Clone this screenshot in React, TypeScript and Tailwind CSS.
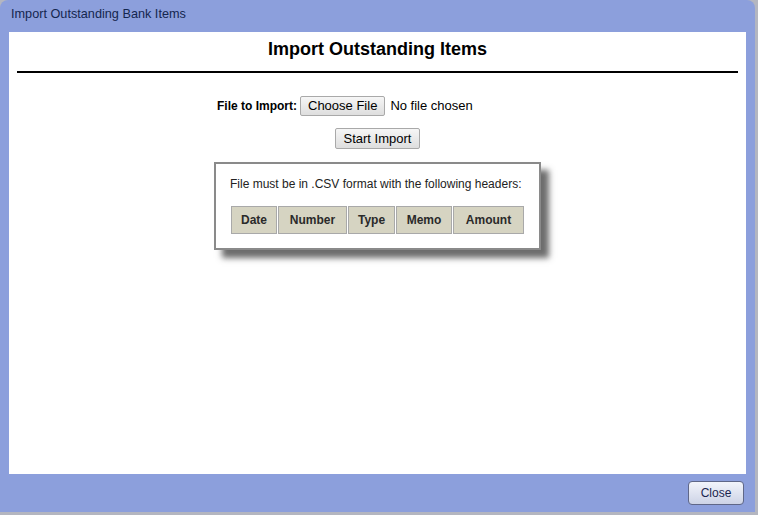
const font = { fontFamily: '"Liberation Sans", Arial, sans-serif' };

const headers = [
  { label: "Date", w: "w-[46px]" },
  { label: "Number", w: "w-[69px]" },
  { label: "Type", w: "w-[47px]" },
  { label: "Memo", w: "w-[56px]" },
  { label: "Amount", w: "w-[71px]" },
];

export default function App() {
  return (
    <div className="h-[515px] w-[758px] overflow-hidden bg-[#b4b6c0]" style={font}>
      {/* dialog */}
      <div className="flex h-[512px] w-[755px] flex-col rounded-t-[8px] bg-[#8c9fdc]">
        {/* title bar */}
        <div className="flex h-[32px] items-center pl-[11px] pb-[2px] text-[12.7px] text-[#14264f]">
          Import Outstanding Bank Items
        </div>

        {/* content */}
        <div className="mx-[9px] flex h-[442px] flex-col bg-white">
          <h1 className="mt-[7px] text-center text-[18px] font-bold leading-[20px] text-black">
            Import Outstanding Items
          </h1>
          <div className="mx-[8px] mt-[12px] h-[2px] bg-black" />

          <div className="mt-[23px] flex justify-center">
            <div className="flex w-[321px] items-center text-[12px]">
              <span className="mr-[3px] font-bold text-black">File to Import:</span>
              <div className="flex items-center">
                <button className="h-[20px] rounded-[2px] border border-[#a9a9a9] bg-gradient-to-b from-[#f6f6f6] to-[#dedede] px-[7px] text-[13px] leading-[18px] text-black">
                  Choose File
                </button>
                <span className="ml-[5px] text-[13px] text-black">No file chosen</span>
              </div>
            </div>
          </div>

          <div className="mt-[12px] flex justify-center">
            <button className="h-[21px] w-[85px] rounded-[2px] border border-[#a9a9a9] bg-gradient-to-b from-[#f6f6f6] to-[#dedede] text-[13px] leading-[19px] text-black">
              Start Import
            </button>
          </div>

          <div className="mt-[13px] flex justify-center">
            <div className="h-[88px] w-[327px] border-2 border-[#8a8a8a] bg-white pt-[12px] pl-[14px] shadow-[8px_8px_6px_rgba(60,60,60,0.75)]">
              <p className="text-[12px] leading-[16px] text-[#222]">
                File must be in .CSV format with the following headers:
              </p>
              <div className="mt-[14px] flex gap-px pl-[1px]">
                {headers.map((h) => (
                  <div
                    key={h.label}
                    className={`${h.w} flex h-[28px] items-center justify-center border border-[#a9a9a9] bg-[#d6d4c2] text-[12px] font-bold text-[#2a2a2a]`}
                  >
                    {h.label}
                  </div>
                ))}
              </div>
            </div>
          </div>
        </div>

        {/* footer */}
        <div className="flex flex-1 items-start justify-end pt-[7px] pr-[11px]">
          <button className="h-[24px] w-[56px] rounded-[4px] border border-[#5f6788] bg-gradient-to-b from-[#f2f4fb] to-[#cdd3e6] text-[12px] text-[#1b2650]">
            Close
          </button>
        </div>
      </div>
    </div>
  );
}
